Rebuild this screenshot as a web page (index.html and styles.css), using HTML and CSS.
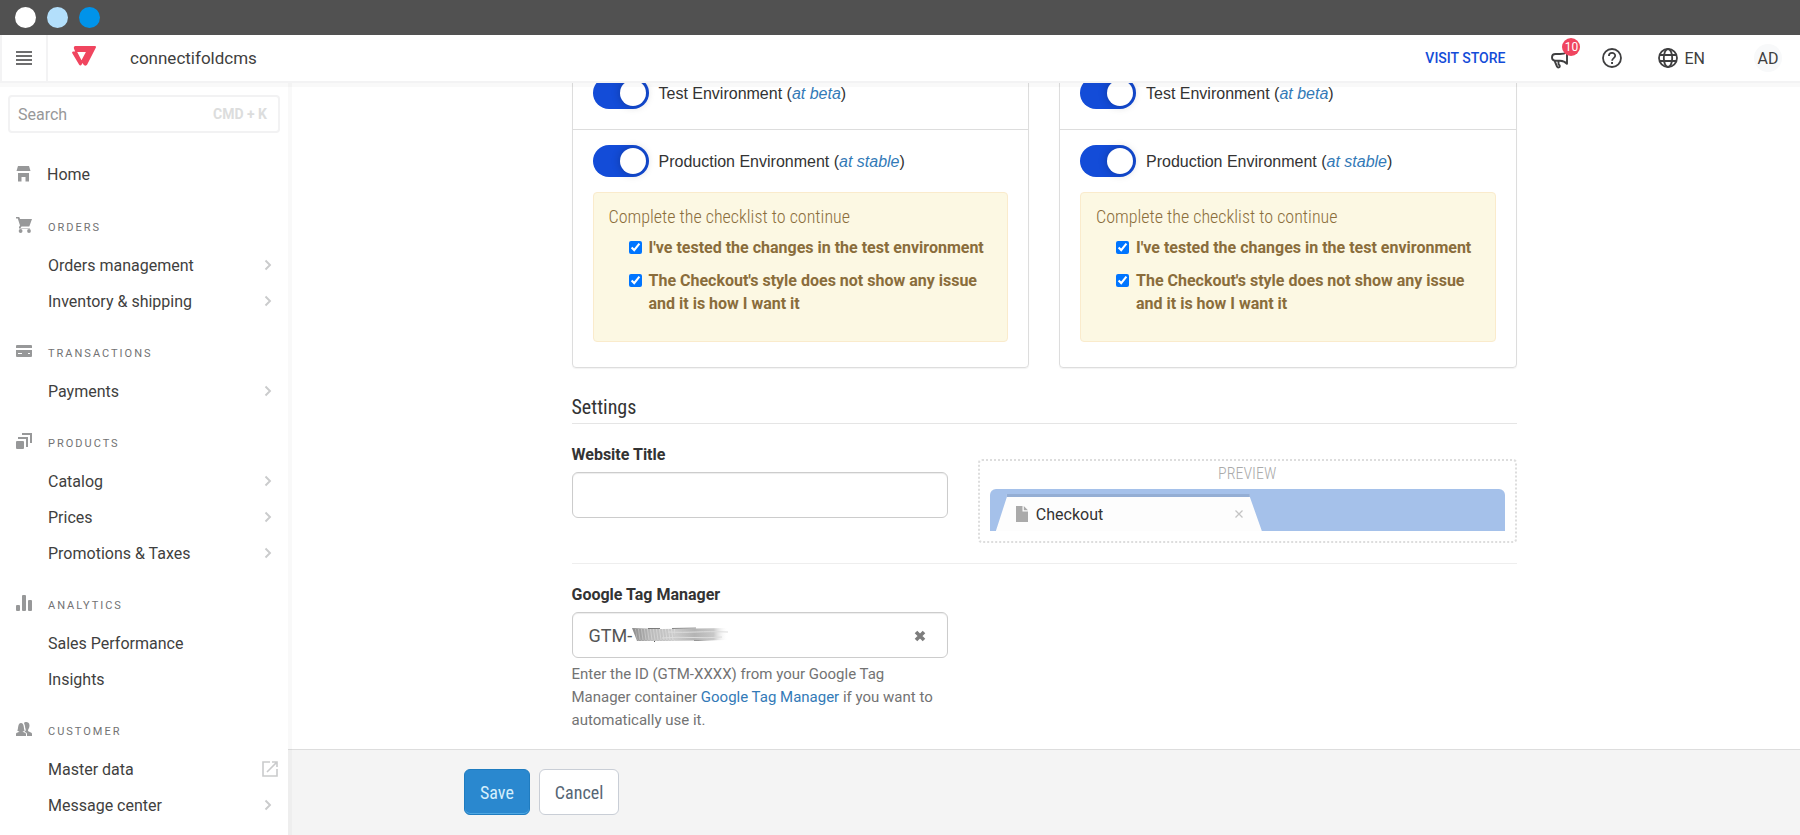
FILE: index.html
```html
<!DOCTYPE html>
<html lang="en">
<head>
<meta charset="utf-8">
<title>connectifoldcms</title>
<link rel="stylesheet" href="styles.css">
</head>
<body>
<svg class="sprite" aria-hidden="true">
  <symbol id="chevron" viewBox="0 0 8 12"><path d="M1.500 1.500 6 6l-4.500 4.500" fill="none" stroke="currentColor" stroke-width="1.900"/></symbol>
</svg>
<div class="app">
  <div class="window-bar"><span class="dot dot-white"></span><span class="dot dot-light"></span><span class="dot dot-blue"></span></div>

  <header class="topbar">
    <button class="menu-button" type="button" aria-label="Menu">
      <svg width="16" height="14" viewBox="0 0 16 14"><path d="M0 1h16M0 5h16M0 9h16M0 13h16" stroke="#3f3f40" stroke-width="1.700"/></svg>
    </button>
    <svg class="logo" width="24" height="20" viewBox="0 0 24 20"><path fill="#f0455f" fill-rule="evenodd" d="M3.300 0H23a1 1 0 0 1 .9 1.500L15.200 18.600c-.7 1.500-3 1.500-3.800 0l-.8-1.600-.9 1.500c-.7 1.300-2 1.300-2.700 0L.3 7.200C-.3 5.800.5 5.500 1.800 5.500h1.400L2.100 3C1.500 1.500 2 0 3.300 0ZM5.200 6l4.300 8.200L13.900 6Z"/></svg>
    <span class="account">connectifoldcms</span>
    <div class="topbar-actions">
      <a class="visit" href="#">VISIT STORE</a>
      <button class="icon-button news" type="button" aria-label="News">
        <svg width="18" height="18" viewBox="0 0 18 18" fill="none" stroke="#3f3f40" stroke-width="1.900" stroke-linejoin="round"><path d="M16 1.500v11.300c-2-2.300-4-3-7-3.100H4.500C2 9.700 1 8.200 1 6.300S2.200 3 4.500 3H9c3 0 5-.5 7-1.500Z"/><path d="M3.500 9.700 6 15.500c.6 1.500 3.200 1.200 2.700-.8-.2-.8-1.500-.9-1.200-2.500V9.700"/></svg>
        <span class="badge">10</span>
      </button>
      <button class="icon-button help-button" type="button" aria-label="Help">
        <svg width="20" height="20" viewBox="0 0 20 20" fill="none" stroke="#3f3f40" stroke-width="1.800"><circle cx="10" cy="10" r="9"/><path d="M6.900 8c0-4 6.300-4 6.300-.2 0 2.300-3.100 2.500-3.100 5"/><path d="M9.100 14.900H11" stroke-width="2"/></svg>
      </button>
      <button class="icon-button lang" type="button">
        <svg width="20" height="20" viewBox="0 0 20 20" fill="none" stroke="#3f3f40" stroke-width="1.800"><circle cx="10" cy="10" r="9"/><ellipse cx="10" cy="10" rx="4.200" ry="9"/><path d="M1.500 7h17M1.500 13h17"/></svg>
        EN
      </button>
      <button class="avatar" type="button">AD</button>
    </div>
  </header>

  <div class="body">
    <nav class="sidebar" aria-label="Main">
      <div class="search">
        <input id="search" type="text" placeholder="Search" aria-label="Search">
        <label for="search">CMD + K</label>
      </div>
      <a class="home" href="#">
        <svg width="16" height="16" viewBox="0 0 16 16" fill="#979899"><path d="M2 0h11l1.500 5H.5Z"/><path d="M2 7h11v8.500H9.500V11h-4v4.500H2Z"/></svg>
        Home
      </a>
      <h2><svg width="16" height="16" viewBox="0 0 16 16" fill="#979899"><path d="M0 0h3.200l.9 2H16l-2.700 7.500H5.500L4.600 11H14v.5H3V10l1-1.500L1.800 1.500H0Z"/><circle cx="4.600" cy="14" r="1.900"/><circle cx="13" cy="14" r="1.900"/></svg>ORDERS</h2>
      <ul>
        <li><a href="#">Orders management<svg class="chev"><use href="#chevron"/></svg></a></li>
        <li><a href="#">Inventory &amp; shipping<svg class="chev"><use href="#chevron"/></svg></a></li>
      </ul>
      <h2><svg width="16" height="16" viewBox="0 0 16 16" fill="#979899"><path fill-rule="evenodd" d="M1 2h14a1 1 0 0 1 1 1v2H0V3a1 1 0 0 1 1-1ZM0 7h16v6a1 1 0 0 1-1 1H1a1 1 0 0 1-1-1Zm2 3v1h4v-1Zm10 0v1h2v-1Z"/></svg>TRANSACTIONS</h2>
      <ul>
        <li><a href="#">Payments<svg class="chev"><use href="#chevron"/></svg></a></li>
      </ul>
      <h2><svg width="16" height="16" viewBox="0 0 16 16" fill="#979899"><rect y="8" width="8" height="8" rx="1"/><path d="M2 4h10v10h-2V6H2ZM6 0h10v10h-2V2H6Z"/></svg>PRODUCTS</h2>
      <ul>
        <li><a href="#">Catalog<svg class="chev"><use href="#chevron"/></svg></a></li>
        <li><a href="#">Prices<svg class="chev"><use href="#chevron"/></svg></a></li>
        <li><a href="#">Promotions &amp; Taxes<svg class="chev"><use href="#chevron"/></svg></a></li>
      </ul>
      <h2><svg width="16" height="16" viewBox="0 0 16 16" fill="#979899"><rect y="10" width="4" height="6" rx="1"/><rect x="6" width="4" height="16" rx="1"/><rect x="12" y="5" width="4" height="11" rx="1"/></svg>ANALYTICS</h2>
      <ul>
        <li><a href="#">Sales Performance</a></li>
        <li><a href="#">Insights</a></li>
      </ul>
      <h2><svg width="16" height="16" viewBox="0 0 16 16" fill="#979899"><path d="M0 15v-2c0-1.500 3-1.500 3.500-2.500C1.500 10 1 9.500 1.500 9c1-1 0-7 3.500-7s2.500 6 3.500 7c.5.500 0 1-2 1.500.5 1 3.500 1 3.500 2.500v2Z"/><path d="M8 2c1-1.500 5.500-1.500 5.500 2.500 0 2.500-1.500 3.500-1.500 5 0 1.500 4 1.500 4 3.500v2h-5v-2c0-1.500-2-1.500-2.500-2.500C11 9.500 9 8 9 5Z"/></svg>CUSTOMER</h2>
      <ul>
        <li><a href="#">Master data<svg class="ext" viewBox="0 0 16 16" fill="none" stroke="currentColor" stroke-width="1.600"><path d="M8 1H1v14h14V8M10 1h5v5M15 1 5 11"/></svg></a></li>
        <li><a href="#">Message center<svg class="chev"><use href="#chevron"/></svg></a></li>
      </ul>
    </nav>

    <main class="main">
      <div class="scroller">
        <div class="content">
          <div class="cards">
            <section class="card">
              <div class="env"><input class="switch" type="checkbox" id="test-a" checked><label for="test-a">Test Environment (<a href="#">at beta</a>)</label></div>
              <div class="env prod"><input class="switch" type="checkbox" id="prod-a" checked><label for="prod-a">Production Environment (<a href="#">at stable</a>)</label></div>
              <div class="alert">
                <h4>Complete the checklist to continue</h4>
                <label class="check"><input type="checkbox" checked><span>I've tested the changes in the test environment</span></label>
                <label class="check"><input type="checkbox" checked><span>The Checkout's style does not show any issue and it is how I want it</span></label>
              </div>
            </section>
            <section class="card">
              <div class="env"><input class="switch" type="checkbox" id="test-b" checked><label for="test-b">Test Environment (<a href="#">at beta</a>)</label></div>
              <div class="env prod"><input class="switch" type="checkbox" id="prod-b" checked><label for="prod-b">Production Environment (<a href="#">at stable</a>)</label></div>
              <div class="alert">
                <h4>Complete the checklist to continue</h4>
                <label class="check"><input type="checkbox" checked><span>I've tested the changes in the test environment</span></label>
                <label class="check"><input type="checkbox" checked><span>The Checkout's style does not show any issue and it is how I want it</span></label>
              </div>
            </section>
          </div>

          <h3>Settings</h3>
          <div class="row">
            <div class="field">
              <label for="title">Website Title</label>
              <input id="title" type="text">
            </div>
            <div class="preview">
              <span class="preview-label">PREVIEW</span>
              <div class="browser">
                <div class="tab">
                  <svg width="12" height="16" viewBox="0 0 12 16" fill="#aaa"><path d="M0 0h6.500v5.500H12V16H0ZM7.800 0 12 4.300H7.800Z"/></svg>
                  <span>Checkout</span>
                  <svg class="tab-close" width="8" height="8" viewBox="0 0 8 8"><path d="m.5.500 7 7m0-7-7 7" stroke="#c4c4c4" stroke-width="1.300"/></svg>
                </div>
              </div>
            </div>
          </div>

          <div class="row last">
            <div class="field">
              <label for="gtm">Google Tag Manager</label>
              <div class="input-wrap">
                <input id="gtm" type="text" value="GTM-">
                <svg class="smudge" width="98" height="18" viewBox="0 0 98 18" aria-hidden="true">
                  <defs>
                    <linearGradient id="fade"><stop offset="0" stop-color="#8b8b8b"/><stop offset=".2" stop-color="#bbb"/><stop offset=".45" stop-color="#ccc"/><stop offset=".65" stop-color="#b4b4b4"/><stop offset=".85" stop-color="#c8c8c8"/><stop offset="1" stop-color="#fff" stop-opacity="0"/></linearGradient>
                    <linearGradient id="streak"><stop offset="0" stop-color="#777"/><stop offset=".7" stop-color="#999"/><stop offset="1" stop-color="#fff" stop-opacity="0"/></linearGradient>
                    <pattern id="hatch" width="3" height="14" patternUnits="userSpaceOnUse"><path d="m0 0 2 14" stroke="#fff" stroke-width="1"/></pattern>
                  </defs>
                  <path fill="url(#fade)" d="M0 2l30 1L96 2v12l-60 1H5Z"/>
                  <path fill="url(#hatch)" d="M3 3h40v12H5Z" opacity=".3"/>
                  <path d="M36 6c20 1 35-1 60 0M30 12c20-2 40 1 60-1" fill="none" stroke="#ddd"/>
                  <path fill="url(#streak)" d="M16 2h12v1H16ZM40 2l24-.5v1L40 3ZM62 14h26v1H62Z"/>
                  <path fill="#555" d="M22 15h1v1h-1Z"/>
                </svg>
                <button class="clear" type="button" aria-label="Clear"><svg width="12" height="12" viewBox="0 0 12 12"><path d="m2 2 8 8m0-8-8 8" stroke="#7d7d7d" stroke-width="3.600"/></svg></button>
              </div>
              <p>Enter the ID (GTM-XXXX) from your Google Tag Manager container <a href="#">Google Tag Manager</a> if you want to automatically use it.</p>
            </div>
          </div>
        </div>
      </div>
      <footer class="footer">
        <div class="footer-inner">
          <button class="btn primary" type="button">Save</button>
          <button class="btn" type="button">Cancel</button>
        </div>
      </footer>
    </main>
  </div>
</div>
</body>
</html>
```
FILE: styles.css
```css
* { box-sizing: border-box; }

body {
  margin: 0;
  font-family: Roboto, "Liberation Sans", sans-serif;
  font-size: 16px;
  color: #3f3f40;
  background: #fff;
}

a { text-decoration: none; color: #337ab7; }
button { font: inherit; color: inherit; background: none; border: 0; padding: 0; }
h2, h3, h4, p, ul { margin: 0; padding: 0; font-weight: 400; }
ul { list-style: none; }
.sprite { display: none; }

.app { display: flex; flex-direction: column; height: 100vh; overflow: hidden; }

.window-bar {
  display: flex;
  align-items: center;
  gap: 11px;
  flex: none;
  height: 35px;
  padding: 0 15px;
  background: #515151;
}
.dot { width: 21px; height: 21px; border-radius: 50%; }
.dot-white { background: #fff; }
.dot-light { background: #b3dffb; }
.dot-blue { background: #0093ea; }

.topbar {
  display: flex;
  align-items: center;
  flex: none;
  height: 48px;
  border-bottom: 2px solid #f3f3f4;
  box-shadow: 0 4px 0 rgba(63, 63, 64, .03);
  position: relative;
  z-index: 2;
}
.menu-button {
  display: grid;
  place-items: center;
  align-self: stretch;
  width: 48px;
  border-left: 2px solid #f3f3f4;
  border-right: 2px solid #f3f3f4;
}
.logo { margin: 0 34px 4px 24px; }
.account { font-size: 17px; }
.topbar-actions { display: flex; align-items: center; margin-left: auto; padding-right: 18px; }
.visit { font-size: 14px; font-weight: 500; color: #134cd8; margin-right: 46px; }
.icon-button { display: flex; align-items: center; gap: 6px; }
.news { position: relative; margin-right: 33px; }
.news svg { margin-top: 4px; }
.badge {
  position: absolute;
  top: -9px;
  left: 11px;
  width: 18px;
  height: 18px;
  border-radius: 50%;
  background: #f0455f;
  color: #fff;
  font-size: 12px;
  line-height: 18px;
  text-align: center;
}
.help-button { margin-right: 36px; }
.lang { margin-right: 49px; }
.avatar { width: 28px; height: 28px; border-radius: 50%; background: #f8f9fa; white-space: nowrap; }

.body { display: flex; flex: 1; min-height: 0; }

.sidebar {
  flex: none;
  width: 288px;
  box-shadow: 4px 0 0 rgba(63, 63, 64, .03);
  z-index: 1;
  padding-top: 12px;
  overflow: hidden;
}
.search {
  display: flex;
  align-items: center;
  height: 38px;
  margin: 0 8px 23px;
  padding: 0 11px 0 8px;
  border: 2px solid #f2f2f3;
  border-radius: 4px;
}
.search input { flex: 1; min-width: 0; border: 0; outline: 0; padding: 0; font: inherit; background: none; }
.search input::placeholder { color: #979899; opacity: 1; }
.search label { font-size: 14px; font-weight: 700; color: #dcdddd; }
.home { display: flex; align-items: center; gap: 15px; height: 36px; padding-left: 16px; color: #3f3f40; }
.sidebar h2 {
  display: flex;
  align-items: center;
  gap: 16px;
  height: 54px;
  padding: 14px 16px 0;
  font-size: 11px;
  letter-spacing: 2px;
  color: #727273;
}
.home + h2 { margin-top: 1px; }
.sidebar h2 svg { margin-bottom: 4px; }
.sidebar li a {
  display: flex;
  align-items: center;
  justify-content: space-between;
  height: 36px;
  padding: 0 16px 0 48px;
  color: #3f3f40;
}
.chev { width: 8px; height: 12px; color: #cacbcc; }
.ext { width: 16px; height: 16px; margin-right: -6px; color: #cacbcc; }

.main { display: flex; flex-direction: column; flex: 1; min-width: 0; }

/* the form is kept at the end of its scroll range */
.scroller {
  display: flex;
  flex-direction: column;
  justify-content: flex-end;
  flex: 1;
  min-height: 0;
  overflow: hidden;
}
.content { flex: none; width: 100%; max-width: 945px; margin: 0 auto; padding-bottom: 17px; }

.cards { display: grid; grid-template-columns: 1fr 1fr; gap: 30px; }
.card {
  padding: 0 20px 25px;
  border: 1px solid #ddd;
  border-radius: 4px;
  box-shadow: 0 1px 1px rgba(0, 0, 0, .05);
}
.env {
  display: flex;
  align-items: center;
  gap: 10px;
  padding: 15px 20px 20px;
  margin: 0 -20px;
  font-family: "Liberation Sans", Arial, sans-serif;
  color: #333;
}
.env label { padding-top: 2px; }
.env a { font-style: italic; }
.prod { border-top: 1px solid #ddd; padding-bottom: 15px; }
.switch {
  appearance: none;
  display: flex;
  justify-content: flex-end;
  align-items: center;
  width: 56px;
  height: 32px;
  margin: 0;
  padding: 3px;
  border-radius: 16px;
  background: #134cd8;
}
.switch::before {
  content: "";
  width: 26px;
  height: 26px;
  border-radius: 50%;
  background: #fff;
  box-shadow: 0 0 8px rgba(0, 0, 0, .25);
}
.alert {
  height: 150px;
  padding: 13px 15px;
  background: #fcf8e3;
  border: 1px solid #faebcc;
  border-radius: 4px;
  color: #8a6d3b;
}
.alert h4 { font-family: "Roboto Condensed", Roboto, sans-serif; font-weight: 300; font-size: 18px; line-height: 22px; margin-bottom: 8px; }
.check { display: flex; align-items: flex-start; gap: 7px; margin: 0 0 10px 20px; font-weight: 700; line-height: 23px; }
.check input { flex: none; width: 13px; height: 13px; margin: 5px 0 0; accent-color: #0075ff; }

h3 {
  margin: 25px 0 0;
  padding-bottom: 2px;
  border-bottom: 1px solid #e5e5e5;
  font-family: "Roboto Condensed", Roboto, sans-serif;
  font-size: 20px;
  line-height: 28px;
  color: #333;
}
.row { display: flex; justify-content: space-between; padding: 19px 0 20px; border-bottom: 1px solid #eee; }
.row.last { border-bottom: 0; padding-bottom: 0; }
.field { width: 376px; }
.field label { display: block; margin-bottom: 6px; font-weight: 700; line-height: 23px; color: #333; }
.field input {
  display: block;
  width: 100%;
  height: 46px;
  padding: 0 16px;
  border: 1px solid #ccc;
  border-radius: 6px;
  box-shadow: inset 0 1px 1px rgba(0, 0, 0, .075);
  background: #fff;
  font: inherit;
  font-size: 18px;
  color: #555;
}
.field p { margin-top: 5px; padding-right: 8px; font-size: 15px; line-height: 23px; color: #737373; }
.input-wrap { position: relative; }
.smudge { position: absolute; left: 60px; top: 14px; }
.clear { position: absolute; right: 16px; top: 12px; width: 24px; height: 24px; display: grid; place-items: center; }

.preview {
  display: flex;
  flex-direction: column;
  width: 57%;
  height: 84px;
  margin-top: 16px;
  padding: 0 10px 10px;
  border: 2px dotted #ddd;
  border-radius: 4px;
}
.preview-label {
  margin-bottom: 2px;
  font-family: "Roboto Condensed", Roboto, sans-serif;
  font-size: 16px;
  font-weight: 300;
  line-height: 26px;
  color: #aaa;
  text-align: center;
}
.browser { height: 42px; padding: 5px 6px 0; border-radius: 6px 6px 0 0; background: #a5c1ea; }
.tab {
  display: flex;
  align-items: center;
  gap: 8px;
  width: 266px;
  height: 37px;
  padding: 0 19px 0 20px;
  border-top: 3px solid #94aed4;
  background: #fdfdfd;
  color: #333;
  clip-path: polygon(11px 0, 254px 0, 254px 3px, 100% 100%, 0 100%, 11px 3px);
}
.tab-close { margin-left: auto; }

.footer { flex: none; padding: 19px 20px 20px; border-top: 1px solid #ddd; background: #f4f4f4; }
.footer-inner { display: flex; gap: 9px; max-width: 1160px; margin: 0 auto; }
.btn {
  height: 46px;
  padding: 0 15px;
  border: 1px solid #c9ced6;
  border-radius: 6px;
  background: #fff;
  color: #566675;
  font-family: "Roboto Condensed", Roboto, sans-serif;
  font-size: 18px;
}
.btn.primary { border-color: #1f7cc0; background: #2a88cf; color: #d5effc; box-shadow: inset 0 -1px 0 #4fa7e2; }
```
